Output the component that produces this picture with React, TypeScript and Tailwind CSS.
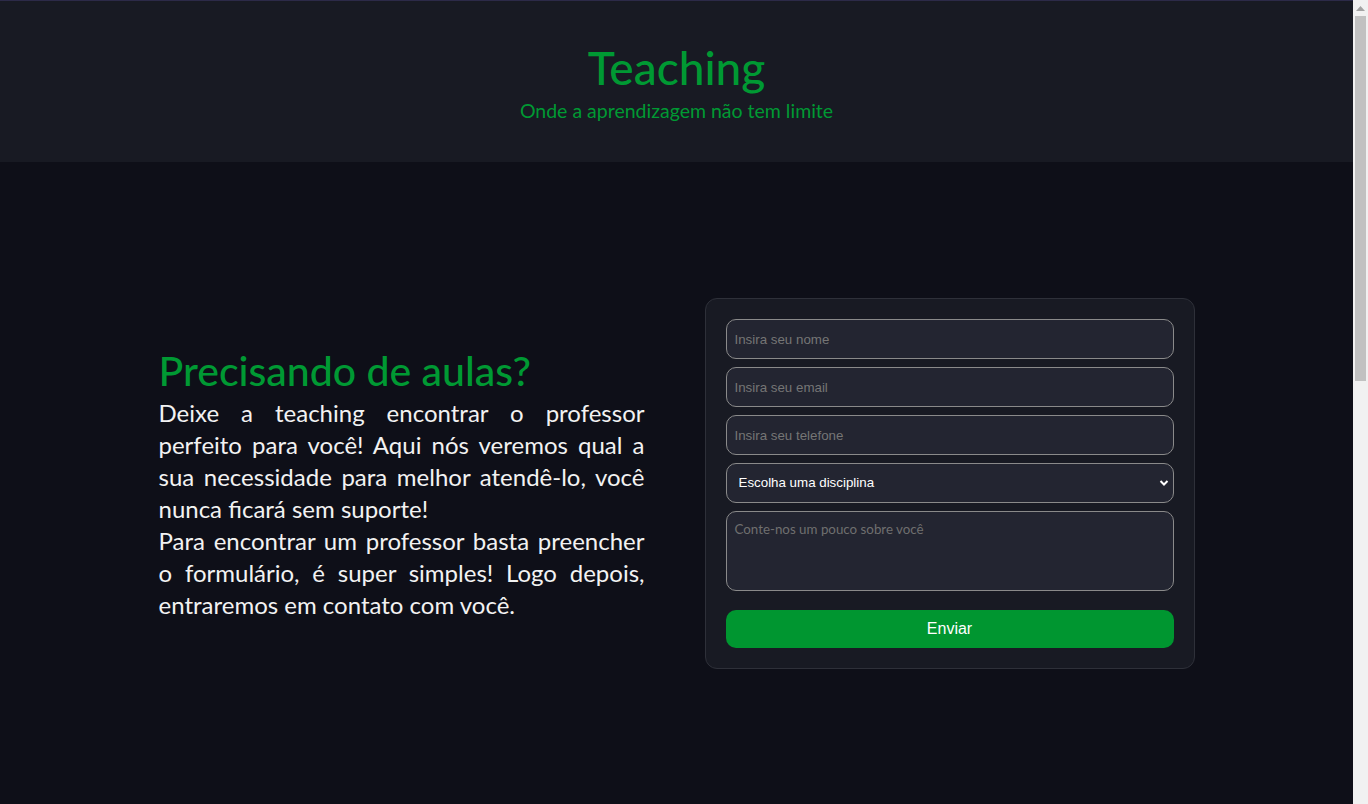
import React from 'react';

const inputClass =
  'w-full h-10 rounded-[10px] border border-[#8a8a8a] bg-[#232531] px-2 text-[13.33px] text-white outline-none placeholder:text-[#757575]';

const App: React.FC = () => {
  return (
    <div className="min-h-screen bg-[#0e0f18] font-['Lato',sans-serif] border-t border-[#2c2a48] pr-[15px]">
      {/* Header */}
      <header className="h-[161px] bg-[#181a23] flex flex-col items-center pt-[38px]">
        <h1 className="text-[46px] leading-[58px] text-[#009933] font-medium">Teaching</h1>
        <p className="mt-[2px] text-[19.5px] leading-6 text-[#009933]">Onde a aprendizagem não tem limite</p>
      </header>

      {/* Hero */}
      <main className="h-[643px] flex items-center justify-center gap-[60px]">
        <div className="w-[486px]">
          <h2 className="text-[41px] leading-[48px] text-[#009933] font-medium mb-[2px]">Precisando de aulas?</h2>
          <p className="text-[24px] leading-8 text-[#f2f2f2] text-justify">
            Deixe a teaching encontrar o professor perfeito para você! Aqui nós veremos qual a sua necessidade para melhor atendê-lo, você nunca ficará sem suporte!
            <br />
            Para encontrar um professor basta preencher o formulário, é super simples! Logo depois, entraremos em contato com você.
          </p>
        </div>

        <form className="w-[490px] rounded-xl border border-[#2e3039] bg-[#181a23] p-5 flex flex-col gap-2 font-['Liberation_Sans',Arial,sans-serif]">
          <input className={inputClass} placeholder="Insira seu nome" />
          <input className={inputClass} placeholder="Insira seu email" />
          <input className={inputClass} placeholder="Insira seu telefone" />
          <div className="relative">
            <select className={inputClass + ' appearance-none pl-3'} defaultValue="">
              <option value="">Escolha uma disciplina</option>
            </select>
            <svg className="pointer-events-none absolute right-[5px] top-[15px]" width="10" height="10" viewBox="0 0 10 10">
              <path d="M1.5 3 L5 6.5 L8.5 3" stroke="white" strokeWidth="2" fill="none" />
            </svg>
          </div>
          <textarea
            className="w-full h-20 rounded-[10px] border border-[#8a8a8a] bg-[#232531] px-2 py-2 text-[13.33px] text-white outline-none resize-none font-['Lato',sans-serif] placeholder:text-[#6f6f6f]"
            placeholder="Conte-nos um pouco sobre você"
          />
          <button type="button" className="mt-[11px] h-[38px] w-full rounded-[10px] bg-[#009630] text-white text-base">
            Enviar
          </button>
        </form>
      </main>

      {/* rest of page */}
      <section className="h-[900px]" />

      {/* window scrollbar */}
      <div className="fixed top-0 right-0 h-screen w-[15px] bg-[#f1f1f1] flex flex-col items-center">
        <svg className="mt-[6px]" width="9" height="5" viewBox="0 0 9 5">
          <path d="M0 5 L4.5 0 L9 5 Z" fill="#a3a3a3" />
        </svg>
        <div className="mt-[5px] h-[365px] w-[11px] bg-[#c1c1c1]" />
      </div>
    </div>
  );
};

export default App;
